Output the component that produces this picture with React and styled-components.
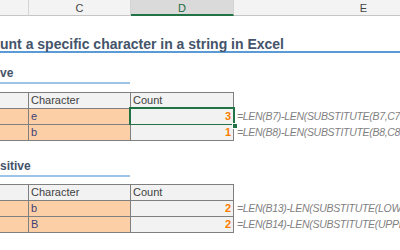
import React from 'react';
import styled, { createGlobalStyle } from 'styled-components';

const columns = [
  { key: 'B', width: 29, label: '' },
  { key: 'C', width: 102, label: 'C' },
  { key: 'D', width: 103, label: 'D', active: true },
  { key: 'E', width: 260, label: 'E' },
];

const caseSensitive = [
  { ch: 'e', count: 3, formula: '=LEN(B7)-LEN(SUBSTITUTE(B7,C7,""))', selected: true },
  { ch: 'b', count: 1, formula: '=LEN(B8)-LEN(SUBSTITUTE(B8,C8,""))' },
];

const caseInsensitive = [
  { ch: 'b', count: 2, formula: '=LEN(B13)-LEN(SUBSTITUTE(LOWER(B13),LOWER(C13),""))' },
  { ch: 'B', count: 2, formula: '=LEN(B14)-LEN(SUBSTITUTE(UPPER(B14),UPPER(C14),""))' },
];

const CountTable = ({ rows, top }) => (
  <Table $top={top}>
    <Row>
      <Cell $w={29} $kind="head" $first />
      <Cell $w={102} $kind="head" $first>Character</Cell>
      <Cell $w={103} $kind="head" $first>Count</Cell>
    </Row>
    {rows.map((row) => (
      <Row key={row.formula}>
        <Cell $w={29} $kind="input" />
        <Cell $w={102} $kind="input">{row.ch}</Cell>
        <Cell $w={103} $kind="calc" $selected={row.selected}>{row.count}</Cell>
        <Note>{row.formula}</Note>
      </Row>
    ))}
  </Table>
);

const App = () => {
  return (
    <>
      <GlobalStyle />
      <Sheet>
        <ColumnBar>
          {columns.map((col) => (
            <ColHead key={col.key} $w={col.width} $active={col.active}>
              {col.label}
            </ColHead>
          ))}
        </ColumnBar>
        <Title>unt a specific character in a string in Excel</Title>
        <Subtitle $top={14}>ve</Subtitle>
        <CountTable rows={caseSensitive} top={8} />
        <Subtitle $top={19}>sitive</Subtitle>
        <CountTable rows={caseInsensitive} top={7} />
      </Sheet>
    </>
  );
};

export default App;

// Styled Components
const GlobalStyle = createGlobalStyle`
  html, body {
    margin: 0;
    padding: 0;
    background: #ffffff;
    overflow: hidden;
  }
  body {
    font-family: "Liberation Sans", Arial, sans-serif;
  }
`;

const Sheet = styled.div`
  display: flex;
  flex-direction: column;
  width: 400px;
  height: 250px;
  overflow: hidden;
  background: #ffffff;
`;

const ColumnBar = styled.div`
  display: flex;
  height: 16px;
  flex-shrink: 0;
  background: #f3f3f3;
`;

const ColHead = styled.div`
  flex: 0 0 ${(p) => p.$w}px;
  box-sizing: border-box;
  display: flex;
  align-items: center;
  justify-content: center;
  border-right: 1px solid #d4d4d4;
  border-bottom: ${(p) => (p.$active ? '2px solid #217346' : '1px solid #c6c6c6')};
  background: ${(p) => (p.$active ? '#dadada' : '#f3f3f3')};
  color: ${(p) => (p.$active ? '#1c6a40' : '#444444')};
  font-size: 11px;
  padding-top: ${(p) => (p.$active ? '1px' : '0')};
`;

const Title = styled.h1`
  margin: 16px 0 0;
  height: 21px;
  flex-shrink: 0;
  box-sizing: border-box;
  display: flex;
  align-items: flex-end;
  border-bottom: 2px solid #5b9bd5;
  font-size: 14px;
  line-height: 14px;
  font-weight: bold;
  color: #44546a;
  white-space: nowrap;
`;

const Subtitle = styled.h2`
  margin: ${(p) => p.$top}px 0 0;
  width: 130px;
  height: 17px;
  flex-shrink: 0;
  box-sizing: border-box;
  display: flex;
  align-items: flex-end;
  padding-bottom: 3px;
  border-bottom: 2px solid #9dc3e6;
  font-size: 12px;
  line-height: 12px;
  font-weight: bold;
  color: #44546a;
  white-space: nowrap;
`;

const Table = styled.div`
  margin-top: ${(p) => p.$top}px;
  display: flex;
  flex-direction: column;
  flex-shrink: 0;
`;

const Row = styled.div`
  display: flex;
`;

const kinds = {
  head: { bg: '#f2f2f2', color: '#3f3f3f' },
  input: { bg: '#fccfa6', color: '#3f3f76' },
  calc: { bg: '#f2f2f2', color: '#fa7d00' },
};

const Cell = styled.div`
  flex: 0 0 ${(p) => p.$w}px;
  box-sizing: border-box;
  position: relative;
  height: ${(p) => (p.$first ? 17 : 16)}px;
  padding: 0 2px;
  border-top: ${(p) => (p.$first ? '1px solid #7f7f7f' : 'none')};
  border-right: 1px solid #7f7f7f;
  border-bottom: 1px solid #7f7f7f;
  background: ${(p) => kinds[p.$kind].bg};
  color: ${(p) => kinds[p.$kind].color};
  font-size: 11px;
  line-height: 15px;
  font-weight: ${(p) => (p.$kind === 'calc' ? 'bold' : 'normal')};
  text-align: ${(p) => (p.$kind === 'calc' ? 'right' : 'left')};
  white-space: nowrap;

  ${(p) =>
    p.$selected &&
    `
    &::after {
      content: '';
      position: absolute;
      left: -2px;
      top: -2px;
      right: -2px;
      bottom: -2px;
      border: 2px solid #217346;
      pointer-events: none;
    }
    &::before {
      content: '';
      position: absolute;
      right: -5px;
      bottom: -5px;
      width: 4px;
      height: 4px;
      background: #217346;
      border: 1px solid #ffffff;
      z-index: 2;
    }
  `}
`;

const Note = styled.div`
  flex: 1 0 auto;
  padding-left: 3px;
  font-size: 10.5px;
  letter-spacing: -0.3px;
  line-height: 15px;
  font-style: italic;
  color: #7f7f7f;
  white-space: nowrap;
`;
